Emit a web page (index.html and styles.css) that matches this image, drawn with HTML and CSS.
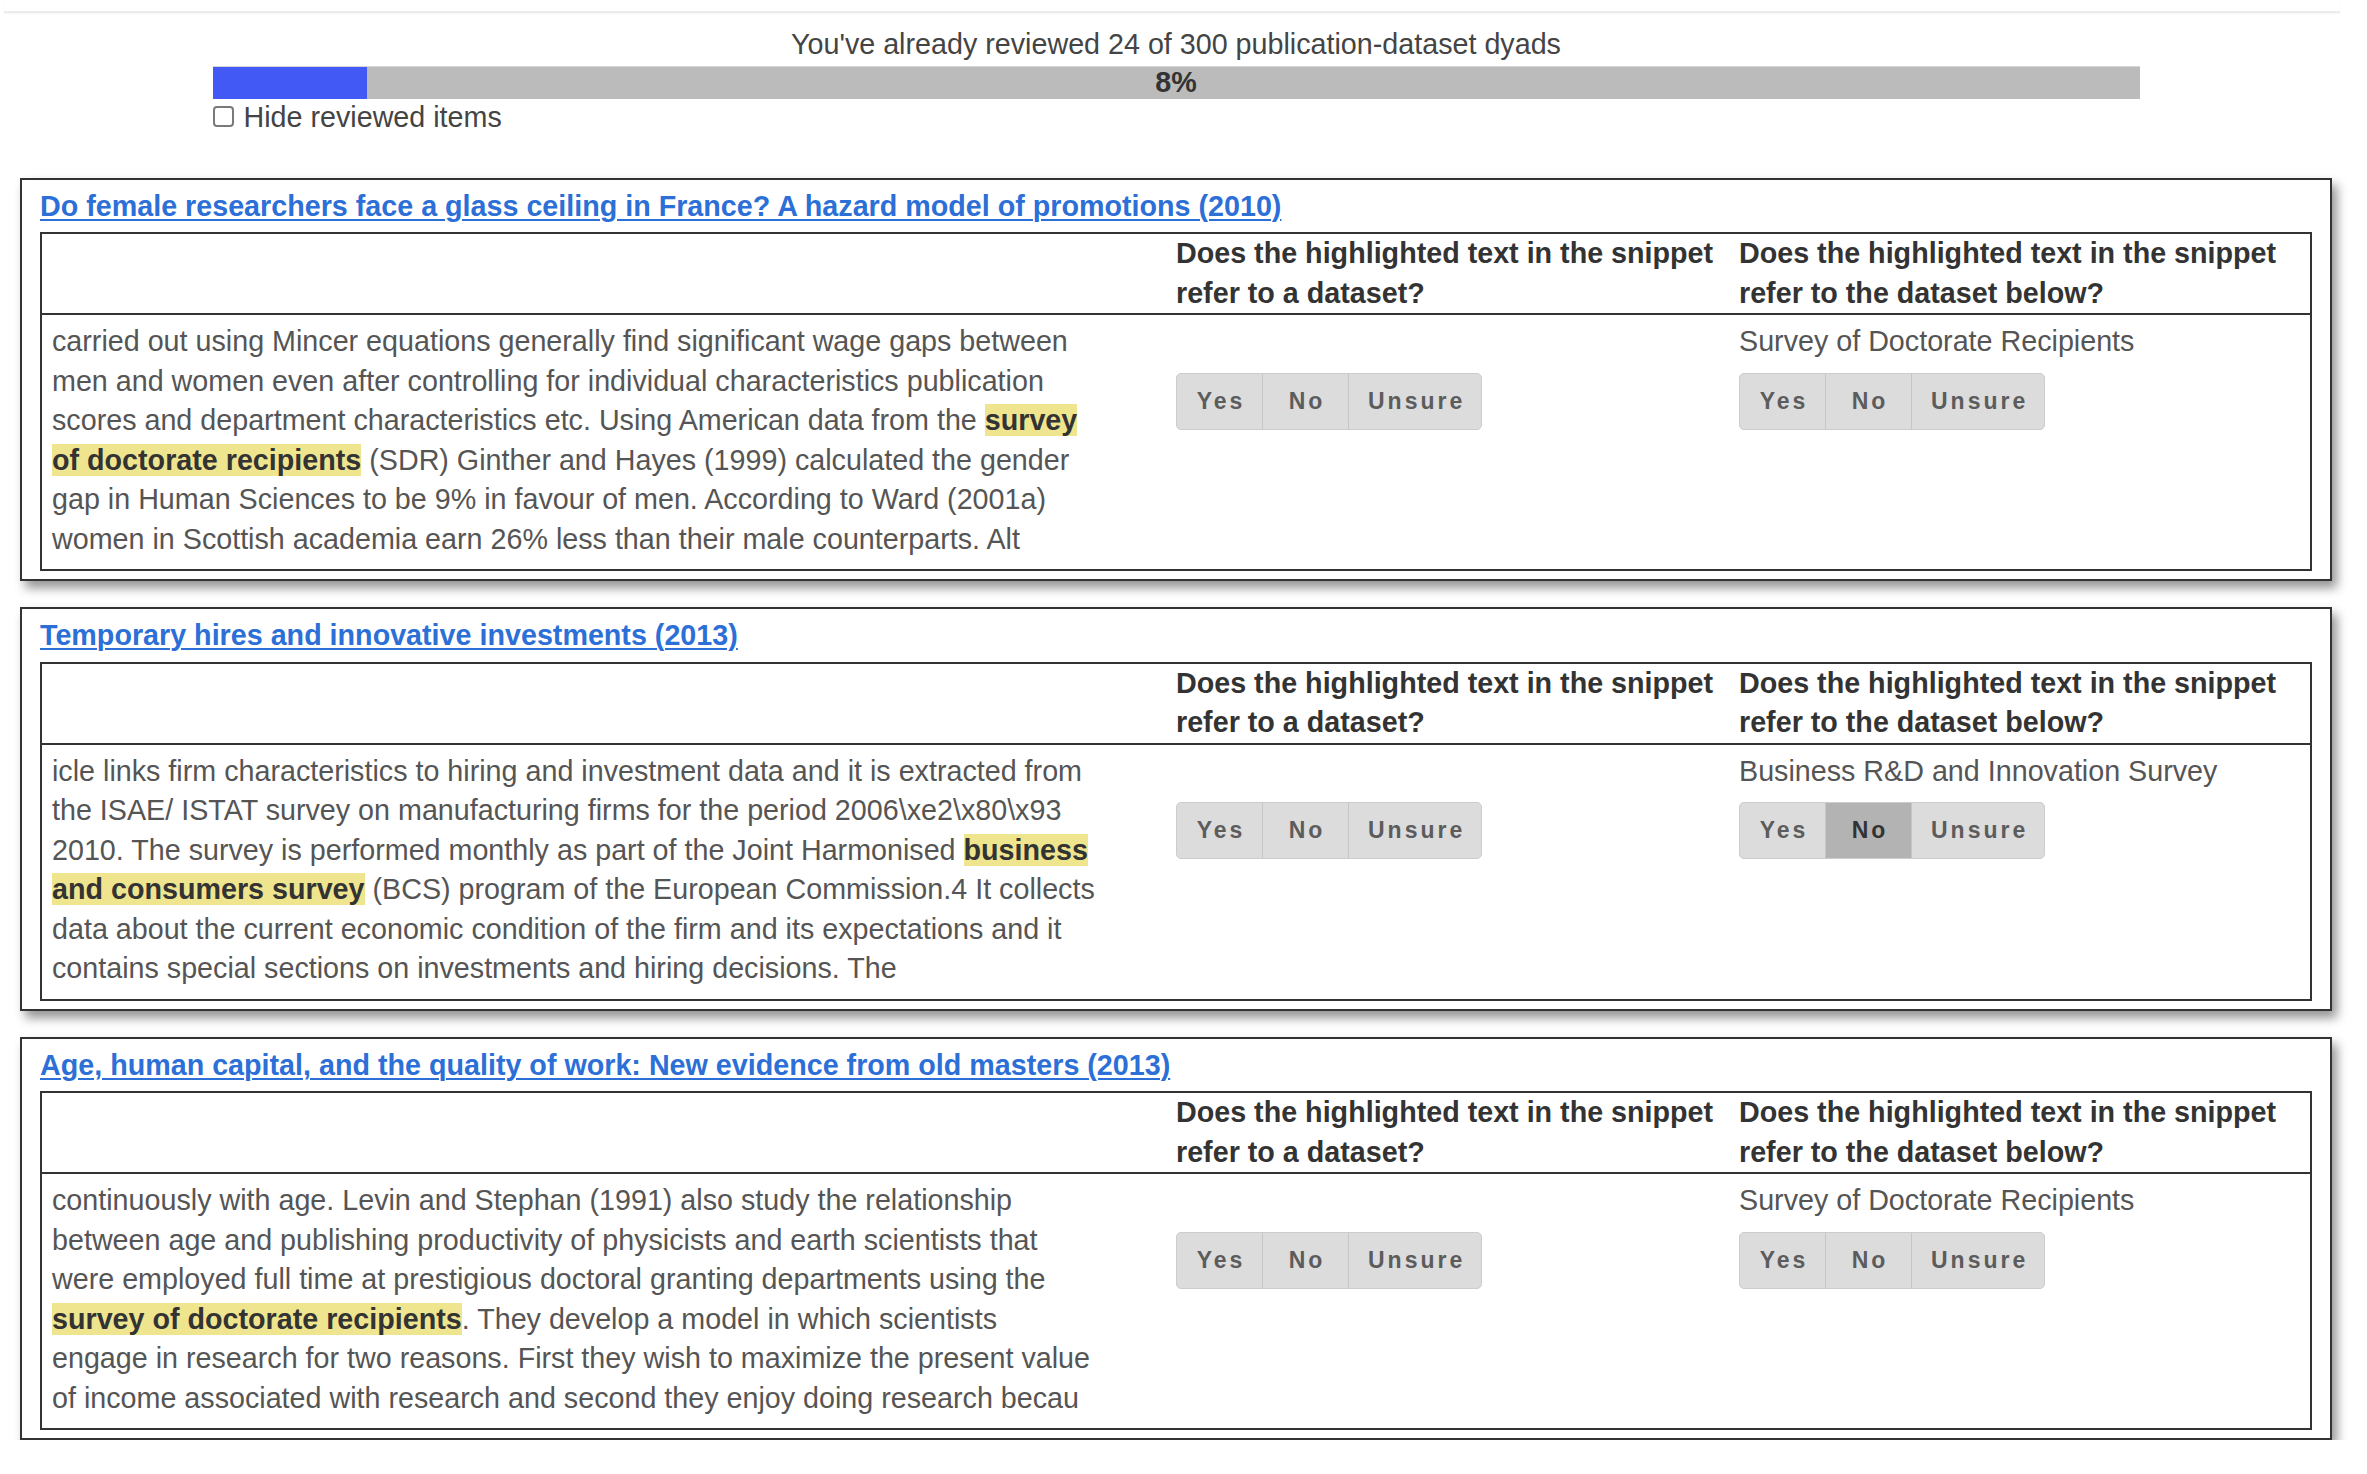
FILE: index.html
```html
<!DOCTYPE html>
<html lang="en">
<head>
<meta charset="utf-8">
<title>Dataset review</title>
<link rel="stylesheet" href="styles.css">
</head>
<body>
<div class="page">
  <div class="topbar"></div>

  <div class="progress-label">You've already reviewed 24 of 300 publication-dataset dyads</div>
  <div class="progress">
    <div class="progress-fill" style="width: 8%"></div>
    <div class="progress-text">8%</div>
  </div>
  <label class="hide-row"><input type="checkbox" class="hide-check"><span>Hide reviewed items</span></label>

  <div class="items">
    <section class="item">
      <div class="item-title"><a href="#">Do female researchers face a glass ceiling in France? A hazard model of promotions (2010)</a></div>
      <div class="qgrid">
        <div class="head head-empty"></div>
        <div class="head">Does the highlighted text in the snippet refer to a dataset?</div>
        <div class="head">Does the highlighted text in the snippet refer to the dataset below?</div>
        <div class="cell snippet-cell"><p class="snippet">carried out using Mincer equations generally find significant wage gaps between men and women even after controlling for individual characteristics publication scores and department characteristics etc. Using American data from the <span class="hl">survey of doctorate recipients</span> (SDR) Ginther and Hayes (1999) calculated the gender gap in Human Sciences to be 9% in favour of men. According to Ward (2001a) women in Scottish academia earn 26% less than their male counterparts. Alt</p></div>
        <div class="cell answer-cell">
          <div class="dataset-name"></div>
          <div class="btn-group"><span class="btn">Yes</span><span class="btn">No</span><span class="btn">Unsure</span></div>
        </div>
        <div class="cell answer-cell">
          <div class="dataset-name">Survey of Doctorate Recipients</div>
          <div class="btn-group"><span class="btn">Yes</span><span class="btn">No</span><span class="btn">Unsure</span></div>
        </div>
      </div>
    </section>

    <section class="item">
      <div class="item-title"><a href="#">Temporary hires and innovative investments (2013)</a></div>
      <div class="qgrid">
        <div class="head head-empty"></div>
        <div class="head">Does the highlighted text in the snippet refer to a dataset?</div>
        <div class="head">Does the highlighted text in the snippet refer to the dataset below?</div>
        <div class="cell snippet-cell"><p class="snippet">icle links firm characteristics to hiring and investment data and it is extracted from the ISAE/ ISTAT survey on manufacturing firms for the period 2006\xe2\x80\x93 2010. The survey is performed monthly as part of the Joint Harmonised <span class="hl">business and consumers survey</span> (BCS) program of the European Commission.4 It collects data about the current economic condition of the firm and its expectations and it contains special sections on investments and hiring decisions. The</p></div>
        <div class="cell answer-cell">
          <div class="dataset-name"></div>
          <div class="btn-group"><span class="btn">Yes</span><span class="btn">No</span><span class="btn">Unsure</span></div>
        </div>
        <div class="cell answer-cell">
          <div class="dataset-name">Business R&amp;D and Innovation Survey</div>
          <div class="btn-group"><span class="btn">Yes</span><span class="btn btn-active">No</span><span class="btn">Unsure</span></div>
        </div>
      </div>
    </section>

    <section class="item">
      <div class="item-title"><a href="#">Age, human capital, and the quality of work: New evidence from old masters (2013)</a></div>
      <div class="qgrid">
        <div class="head head-empty"></div>
        <div class="head">Does the highlighted text in the snippet refer to a dataset?</div>
        <div class="head">Does the highlighted text in the snippet refer to the dataset below?</div>
        <div class="cell snippet-cell"><p class="snippet">continuously with age. Levin and Stephan (1991) also study the relationship between age and publishing productivity of physicists and earth scientists that were employed full time at prestigious doctoral granting departments using the <span class="hl">survey of doctorate recipients</span>. They develop a model in which scientists engage in research for two reasons. First they wish to maximize the present value of income associated with research and second they enjoy doing research becau</p></div>
        <div class="cell answer-cell">
          <div class="dataset-name"></div>
          <div class="btn-group"><span class="btn">Yes</span><span class="btn">No</span><span class="btn">Unsure</span></div>
        </div>
        <div class="cell answer-cell">
          <div class="dataset-name">Survey of Doctorate Recipients</div>
          <div class="btn-group"><span class="btn">Yes</span><span class="btn">No</span><span class="btn">Unsure</span></div>
        </div>
      </div>
    </section>
  </div>
</div>
</body>
</html>
```

FILE: styles.css
```css
html, body {
  margin: 0;
  padding: 0;
  background: #ffffff;
}

.page {
  width: 2352px;
  font-family: "Liberation Sans", Arial, sans-serif;
  font-size: 28.7px;
  line-height: 39.5px;
  color: #444444;
}

.topbar {
  width: 2336px;
  margin-left: 4px;
  height: 11px;
  border-bottom: 2px solid #ececec;
  box-shadow: 0 1px 2px rgba(0, 0, 0, 0.04);
}

.progress-label {
  margin-top: 12px;
  text-align: center;
  color: #444444;
}

.progress {
  position: relative;
  width: 1927px;
  height: 33px;
  margin: 1px auto 0;
  background: #bbbbbb;
  border-top: 1px solid #d6d6d6;
  box-sizing: border-box;
}

.progress-fill {
  height: 100%;
  background: #4259f5;
}

.progress-text {
  position: absolute;
  left: 0;
  right: 0;
  top: -1px;
  height: 33px;
  line-height: 33px;
  text-align: center;
  font-weight: bold;
  color: #333333;
}

.hide-row {
  display: flex;
  align-items: center;
  width: 1927px;
  margin: 0 auto;
  height: 36px;
  line-height: 36px;
  color: #444444;
}

.hide-check {
  appearance: none;
  -webkit-appearance: none;
  width: 21px;
  height: 21px;
  margin: 0 10px 0 0;
  border: 2px solid #7a7a7a;
  border-radius: 4px;
  background: #ffffff;
  box-sizing: border-box;
}

.items {
  margin-top: 43px;
  display: flex;
  flex-direction: column;
  gap: 26px;
}

.item {
  margin: 0 20px;
  border: 2px solid #333333;
  padding: 7px 18px 8px;
  background: #ffffff;
  box-shadow: 5px 7px 10px rgba(0, 0, 0, 0.42);
}

.item-title {
  margin-bottom: 6px;
}

.item-title a {
  color: #2c6fd7;
  font-weight: bold;
  text-decoration: underline;
  text-decoration-thickness: 2px;
  text-underline-offset: 3px;
}

.qgrid {
  display: grid;
  grid-template-columns: 1124px 563px 1fr;
  border: 2px solid #333333;
}

.head {
  padding: 0 4px 0 10px;
  font-weight: bold;
  color: #333333;
  border-bottom: 2px solid #333333;
}

.cell {
  padding: 7px 4px 10px 10px;
}

.snippet {
  margin: 0;
  width: 1046px;
  color: #555555;
}

.hl {
  background: #efe58f;
  font-weight: bold;
  color: #333333;
}

.dataset-name {
  min-height: 39.5px;
  color: #555555;
}

.btn-group {
  margin-top: 11px;
  display: inline-flex;
  border: 1px solid #cccccc;
  border-radius: 5px;
  background: #dcdcdc;
  overflow: hidden;
}

.btn {
  box-sizing: border-box;
  min-width: 86px;
  height: 55px;
  line-height: 55px;
  padding: 0 16px 0 19px;
  text-align: center;
  font-size: 23px;
  font-weight: bold;
  letter-spacing: 3px;
  color: #5c5c5c;
  border-right: 1px solid #c6c6c6;
}

.btn:last-child {
  border-right: 0;
}

.btn-active {
  background: #b3b3b3;
  color: #333333;
}
```
